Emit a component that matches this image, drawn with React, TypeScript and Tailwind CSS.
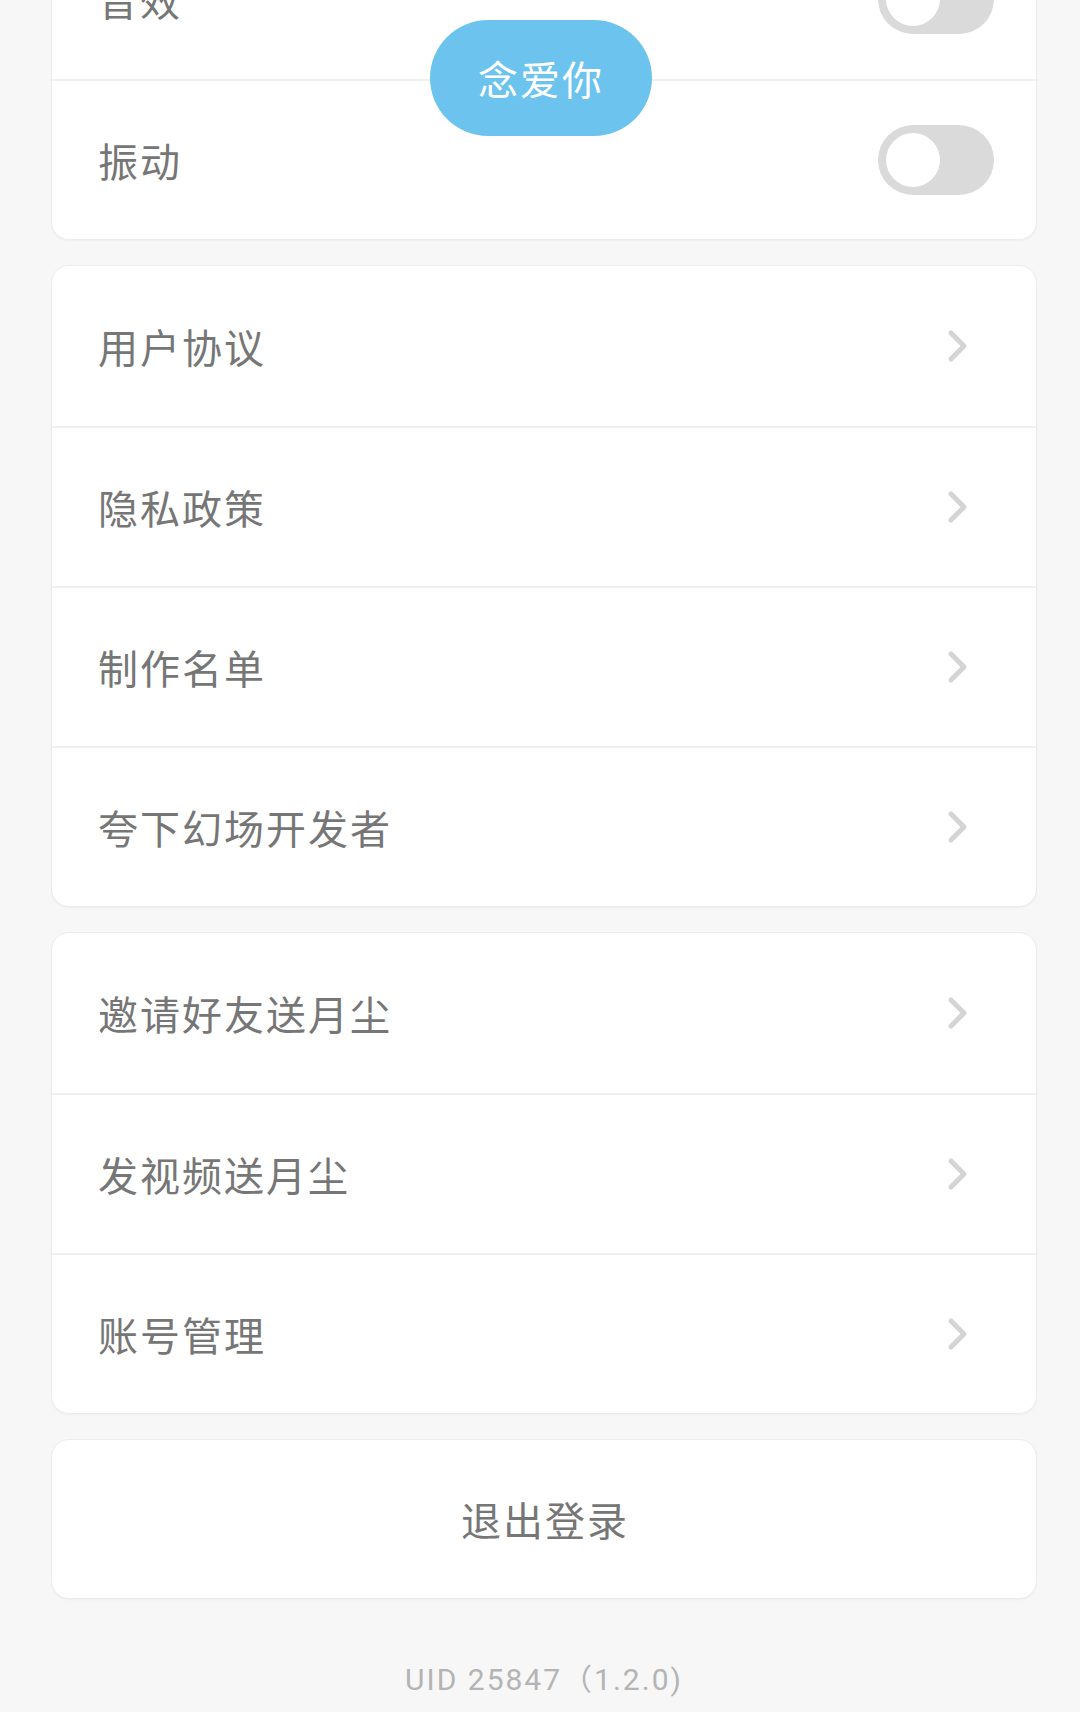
import React from 'react'

const groups: string[][] = [
  ['用户协议', '隐私政策', '制作名单', '夸下幻场开发者'],
  ['邀请好友送月尘', '发视频送月尘', '账号管理'],
]

function Chevron() {
  return (
    <svg width="22" height="34" viewBox="0 0 22 34" className="mr-[67px]">
      <polyline
        points="4,4 17,17 4,30"
        fill="none"
        stroke="#d4d4d4"
        strokeWidth="5"
        strokeLinecap="round"
        strokeLinejoin="round"
      />
    </svg>
  )
}

function Toggle() {
  return (
    <div className="mr-[42px] flex h-[70px] w-[116px] items-center rounded-full bg-[#dadada]">
      <div className="ml-[8px] h-[54px] w-[54px] rounded-full bg-white" />
    </div>
  )
}

function Row({ label, first, right }: { label: string; first?: boolean; right: React.ReactNode }) {
  return (
    <div
      className={
        'flex h-[160px] items-center justify-between ' +
        (first ? '' : 'border-t-2 border-[#f0f0f0]')
      }
    >
      <span className="pl-[46px] text-[40px] tracking-[2px] text-[#767676]">{label}</span>
      {right}
    </div>
  )
}

export default function App() {
  return (
    <div className="relative min-h-[1712px] overflow-hidden bg-[#f7f7f7] font-['Noto_Sans_CJK_SC',sans-serif]">
      <div className="-mt-[82px] flex flex-col gap-[25px] pl-[51px] pr-[43px]">
        <div className="rounded-[18px] border border-[#ececec] bg-white shadow-[0_1px_2px_rgba(0,0,0,0.04)]">
          <Row label="音效" first right={<Toggle />} />
          <Row label="振动" right={<Toggle />} />
        </div>

        {groups.map((g, gi) => (
          <div
            key={gi}
            className="rounded-[18px] border border-[#ececec] bg-white shadow-[0_1px_2px_rgba(0,0,0,0.04)]"
          >
            {g.map((label, i) => (
              <Row key={label} label={label} first={i === 0} right={<Chevron />} />
            ))}
          </div>
        ))}

        <div className="flex h-[160px] items-center justify-center rounded-[18px] border border-[#ececec] bg-white shadow-[0_1px_2px_rgba(0,0,0,0.04)]">
          <span className="pl-[2px] text-[40px] tracking-[2px] text-[#767676]">退出登录</span>
        </div>
      </div>

      <div className="mt-[61px] pl-[8px] text-center font-['Roboto','Noto_Sans_CJK_SC',sans-serif] text-[30px] leading-[40px] tracking-[2px] text-[#b4b4b4]">
        UID 25847（1.2.0)
      </div>

      <div className="absolute left-[430px] top-[20px] flex h-[116px] w-[222px] items-center justify-center rounded-full bg-[#6cc4ee]">
        <span className="text-[40px] tracking-[2px] text-white">念爱你</span>
      </div>
    </div>
  )
}
